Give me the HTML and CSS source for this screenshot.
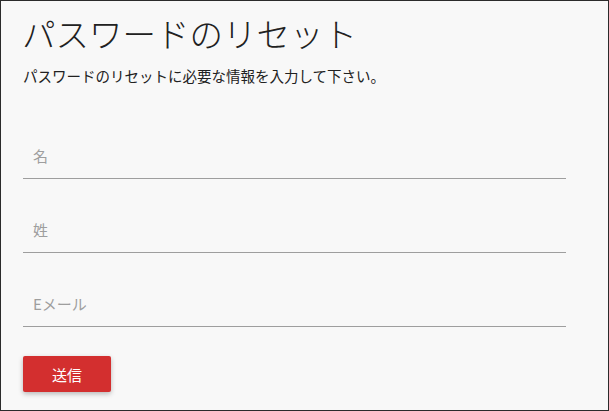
FILE: index.html
```html
<!DOCTYPE html>
<html lang="ja">
<head>
    <meta charset="UTF-8">
    <title>パスワードのリセット</title>
    <link rel="stylesheet" href="styles.css">
</head>
<body>
    <div class="page">
        <h1>パスワードのリセット</h1>
        <p class="lead">パスワードのリセットに必要な情報を入力して下さい。</p>
        <form id="reset-form" class="reset-form">
            <div class="field">
                <input type="text" id="first-name" placeholder="名" aria-label="名">
            </div>
            <div class="field">
                <input type="text" id="last-name" placeholder="姓" aria-label="姓">
            </div>
            <div class="field">
                <input type="email" id="email" placeholder="Eメール" aria-label="Eメール">
            </div>
            <button type="button" class="submit-btn">送信</button>
        </form>
    </div>
</body>
</html>
```
FILE: styles.css
```css
:root {
    --text-color: #212121;
    --muted-color: #9e9e9e;
    --line-color: #9e9e9e;
    --accent-color: #d32f2f;
    --background-color: #f8f8f8;
}
* {
    box-sizing: border-box;
}
html, body {
    margin: 0;
    height: 100%;
}
body {
    font-family: "Noto Sans CJK JP", "Noto Sans", sans-serif;
    color: var(--text-color);
}
.page {
    height: 100%;
    border: 1px solid #2b2b2b;
    background-color: var(--background-color);
    padding: 0 22px;
    overflow: hidden;
}
h1 {
    margin: 10px 0 0 -1px;
    font-size: 33.5px;
    font-weight: 300;
    line-height: 44px;
}
.lead {
    margin: 10px 0 0;
    font-size: 14.5px;
    line-height: 22px;
}
.reset-form {
    width: 543px;
    margin-top: 45px;
}
.field {
    margin-bottom: 27px;
}
.field input {
    display: block;
    width: 100%;
    height: 47px;
    padding: 0 10px;
    border: none;
    border-bottom: 1px solid var(--line-color);
    background: transparent;
    font-family: inherit;
    font-size: 15px;
    color: var(--text-color);
}
.field input::placeholder {
    color: var(--muted-color);
}
.field input:focus {
    outline: none;
    border-bottom-color: var(--accent-color);
}
.submit-btn {
    display: block;
    width: 88px;
    height: 36px;
    margin-top: 29px;
    border: none;
    border-radius: 2px;
    background-color: var(--accent-color);
    color: white;
    font-family: inherit;
    font-size: 15px;
    cursor: pointer;
    box-shadow: 0 2px 5px rgba(0, 0, 0, 0.26);
}
.submit-btn:hover {
    background-color: #c62828;
}
```
